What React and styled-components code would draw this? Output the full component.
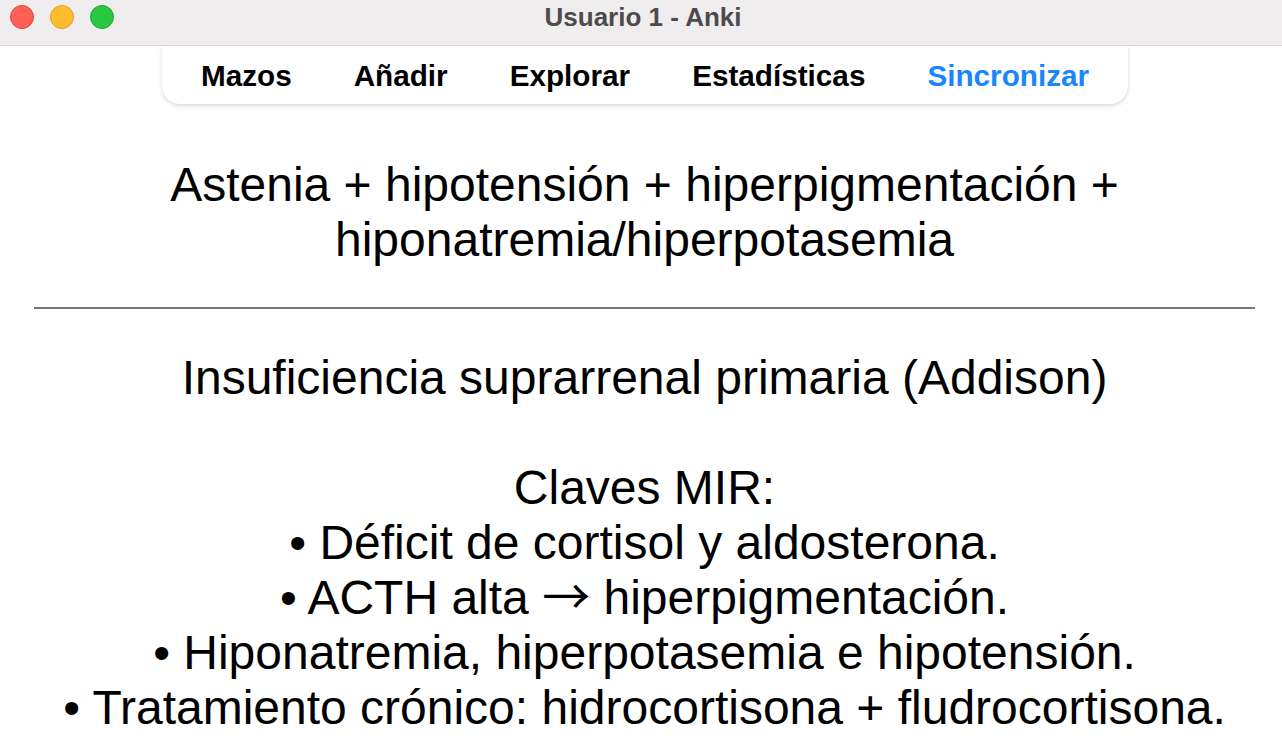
import React from "react";
import styled, { createGlobalStyle } from "styled-components";

const Global = createGlobalStyle`
  html, body { margin: 0; padding: 0; background: #ffffff; }
  body { font-family: "Liberation Sans", Arial, sans-serif; overflow: hidden; }
`;

const Window = styled.div`
  width: 1282px;
  height: 748px;
  display: flex;
  flex-direction: column;
  background: #ffffff;
  overflow: hidden;
`;

const TitleBar = styled.div`
  position: relative;
  height: 45px;
  flex: 0 0 45px;
  background: #efedee;
  border-bottom: 1px solid #d9d7d8;
  display: flex;
  align-items: center;
  justify-content: center;
`;

const Lights = styled.div`
  position: absolute;
  left: 10px;
  top: 5px;
  display: flex;
  gap: 16px;
`;

const Light = styled.span`
  width: 24px;
  height: 24px;
  border-radius: 50%;
  box-sizing: border-box;
  background: ${(p) => p.$bg};
  border: 1px solid ${(p) => p.$border};
`;

const Title = styled.div`
  font-family: "Liberation Sans", Arial, sans-serif;
  font-weight: 700;
  font-size: 26px;
  color: #4d4b4c;
  margin-top: -10px;
  padding-left: 4px;
`;

const ToolbarRow = styled.div`
  display: flex;
  justify-content: center;
  padding-left: 8px;
`;

const Toolbar = styled.nav`
  display: flex;
  align-items: center;
  height: 58px;
  padding: 0 8px;
  background: #ffffff;
  border-radius: 0 0 18px 18px;
  box-shadow: 0 2px 4px rgba(0, 0, 0, 0.14), 0 0 1px rgba(0, 0, 0, 0.08);
`;

const NavItem = styled.span`
  padding: 2px 31px 0;
  font-family: "Liberation Sans", Arial, sans-serif;
  font-weight: 700;
  font-size: 29.7px;
  color: ${(p) => (p.$active ? "#1a86fb" : "#000000")};
`;

const Card = styled.main`
  padding: 53px 27px 0 34px;
  font-family: "Liberation Sans", Arial, sans-serif;
  font-size: 48px;
  line-height: 55px;
  color: #000000;
  text-align: center;
`;

const Block = styled.div``;

const Arrow = styled.span`
  font-family: "Noto Sans CJK JP", "DejaVu Sans", sans-serif;
  font-size: 48px;
  line-height: 0;
`;

const Rule = styled.hr`
  border: none;
  height: 2px;
  background: #777777;
  margin: 40px 0 41px;
`;

const lights = [
  ["#fe5f57", "#e0443e"],
  ["#febc2e", "#dea123"],
  ["#28c840", "#1aab29"],
];

const navItems = ["Mazos", "Añadir", "Explorar", "Estadísticas", "Sincronizar"];

export default function App() {
  return (
    <>
      <Global />
      <Window>
        <TitleBar>
          <Lights>
            {lights.map(([bg, border], i) => (
              <Light key={i} $bg={bg} $border={border} />
            ))}
          </Lights>
          <Title>Usuario 1 - Anki</Title>
        </TitleBar>
        <ToolbarRow>
          <Toolbar>
            {navItems.map((t) => (
              <NavItem key={t} $active={t === "Sincronizar"}>
                {t}
              </NavItem>
            ))}
          </Toolbar>
        </ToolbarRow>
        <Card>
          <Block>
            Astenia + hipotensión + hiperpigmentación + hiponatremia/hiperpotasemia
          </Block>
          <Rule />
          <Block>
            Insuficiencia suprarrenal primaria (Addison)
            <br />
            <br />
            Claves MIR:
            <br />• Déficit de cortisol y aldosterona.
            <br />• ACTH alta <Arrow>→</Arrow> hiperpigmentación.
            <br />• Hiponatremia, hiperpotasemia e hipotensión.
            <br />• Tratamiento crónico: hidrocortisona + fludrocortisona.
          </Block>
        </Card>
      </Window>
    </>
  );
}
